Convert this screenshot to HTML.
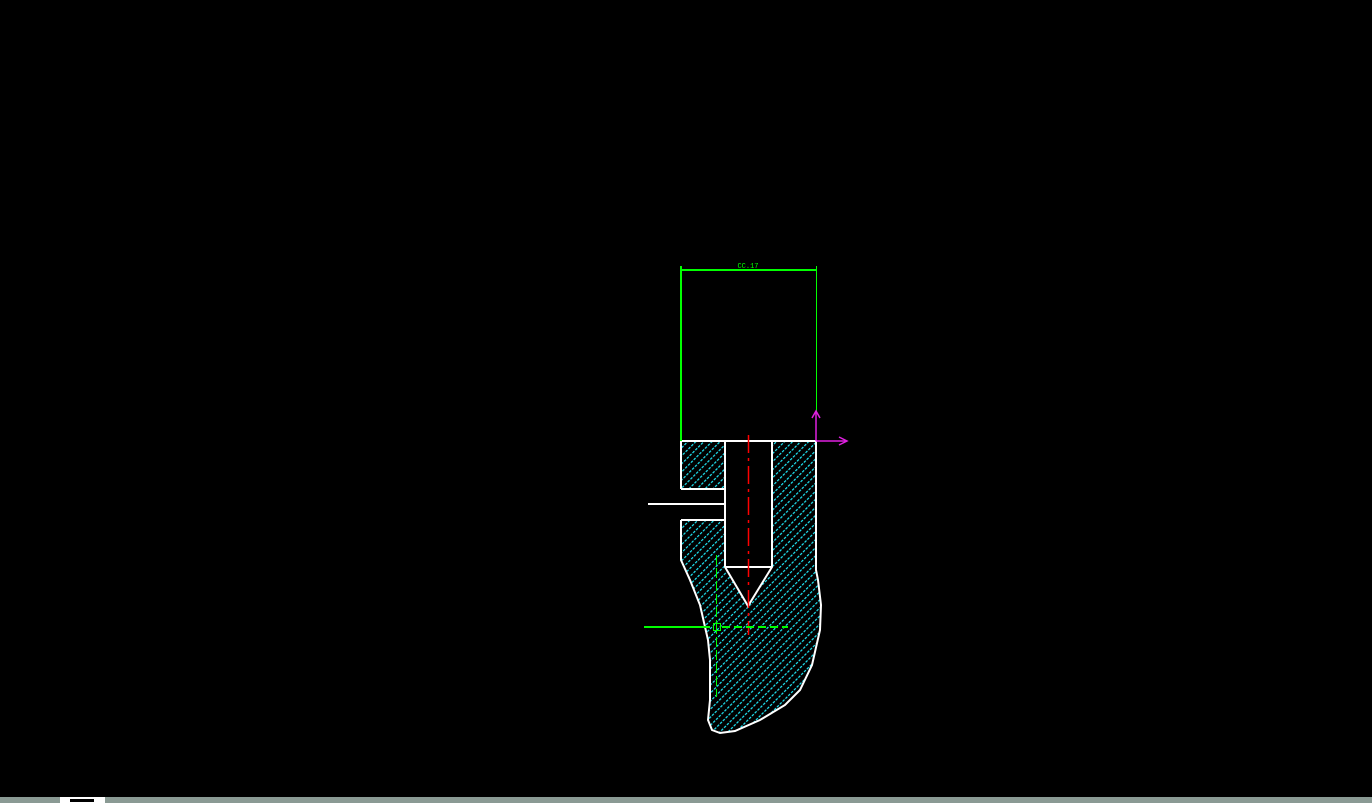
<!DOCTYPE html>
<html><head><meta charset="utf-8"><style>
html,body{margin:0;padding:0;background:#000;width:1372px;height:803px;overflow:hidden}
svg{display:block}
</style></head><body>
<svg width="1372" height="803" viewBox="0 0 1372 803" xmlns="http://www.w3.org/2000/svg">
<defs>
<pattern id="h" patternUnits="userSpaceOnUse" width="5.7" height="4" patternTransform="rotate(45)">
<line x1="0.6" y1="0" x2="0.6" y2="4" stroke="#20e8f8" stroke-width="1.2" stroke-dasharray="2.6 1.4"/>
</pattern>
<clipPath id="c"><path d="M681,441 L681,560 L690,580 L700,605 L708,640 L710,660 L710,700 L708,720 L712,730 L720,733 L735,731 L760,720 L785,705 L800,690 L812,665 L820,630 L821,605 L818,580 L816,570 L816,441 Z"/></clipPath>
</defs>
<rect width="1372" height="803" fill="#000"/>
<g clip-path="url(#c)">
<rect x="670" y="430" width="160" height="310" fill="url(#h)"/>
<rect x="724" y="441" width="49" height="126" fill="#000"/>
<polygon points="725,567 772,567 748,606" fill="#000"/>
<rect x="681" y="489" width="44" height="31" fill="#000"/>
</g>
<g fill="none" stroke="#fff" stroke-width="2">
<path d="M681,441 L681,489"/>
<path d="M681,520 L681,560 L690,580 L700,605 L708,640 L710,660 L710,700 L708,720 L712,730 L720,733 L735,731 L760,720 L785,705 L800,690 L812,665 L820,630 L821,605 L818,580 L816,570 L816,441"/>
<path d="M680,441 L817,441"/>
<path d="M725,441 L725,567 L748,606 L772,567 L772,441 M725,567 L772,567"/>
<path d="M681,489 L725,489 M681,520 L725,520 M648,504 L725,504"/>
</g>
<line x1="748.5" y1="435" x2="748.5" y2="635" stroke="#f00" stroke-width="1.5" stroke-dasharray="18 5 3 5"/>
<g fill="#00ff00" shape-rendering="crispEdges">
<rect x="644" y="626" width="66" height="2"/>
<rect x="681" y="269" width="136" height="2"/>
<rect x="680" y="266" width="2" height="175"/>
<rect x="816" y="266" width="1" height="146"/>
<rect x="716" y="555" width="1" height="10"/><rect x="716" y="568" width="1" height="10"/><rect x="716" y="581" width="1" height="10"/><rect x="716" y="594" width="1" height="10"/><rect x="716" y="607" width="1" height="10"/><rect x="716" y="620" width="1" height="14"/><rect x="716" y="637" width="1" height="10"/><rect x="716" y="650" width="1" height="10"/><rect x="716" y="663" width="1" height="10"/><rect x="716" y="676" width="1" height="10"/><rect x="716" y="689" width="1" height="8"/>
<rect x="722" y="626" width="8" height="2"/><rect x="734" y="626" width="8" height="2"/><rect x="746" y="626" width="8" height="2"/><rect x="758" y="626" width="8" height="2"/><rect x="770" y="626" width="8" height="2"/><rect x="782" y="626" width="6" height="2"/>
</g>
<rect x="713.5" y="623.5" width="7" height="7" fill="none" stroke="#0f0" stroke-width="1"/>
<text x="748" y="268" fill="#0f0" font-family="Liberation Mono, monospace" font-size="7" text-anchor="middle">CC.17</text>
<g stroke="#e020e0" stroke-width="1.5" fill="none">
<line x1="816" y1="441" x2="816" y2="412"/>
<path d="M812,418 L816,411 L820,418"/>
<line x1="816" y1="441" x2="846" y2="441"/>
<path d="M839,437 L847,441 L839,445"/>
</g>
<rect x="0" y="797" width="1372" height="6" fill="#8a9a94"/>
<rect x="60" y="797" width="45" height="6" fill="#fff"/>
<rect x="70" y="799" width="24" height="3" fill="#000"/>
</svg>
</body></html>
